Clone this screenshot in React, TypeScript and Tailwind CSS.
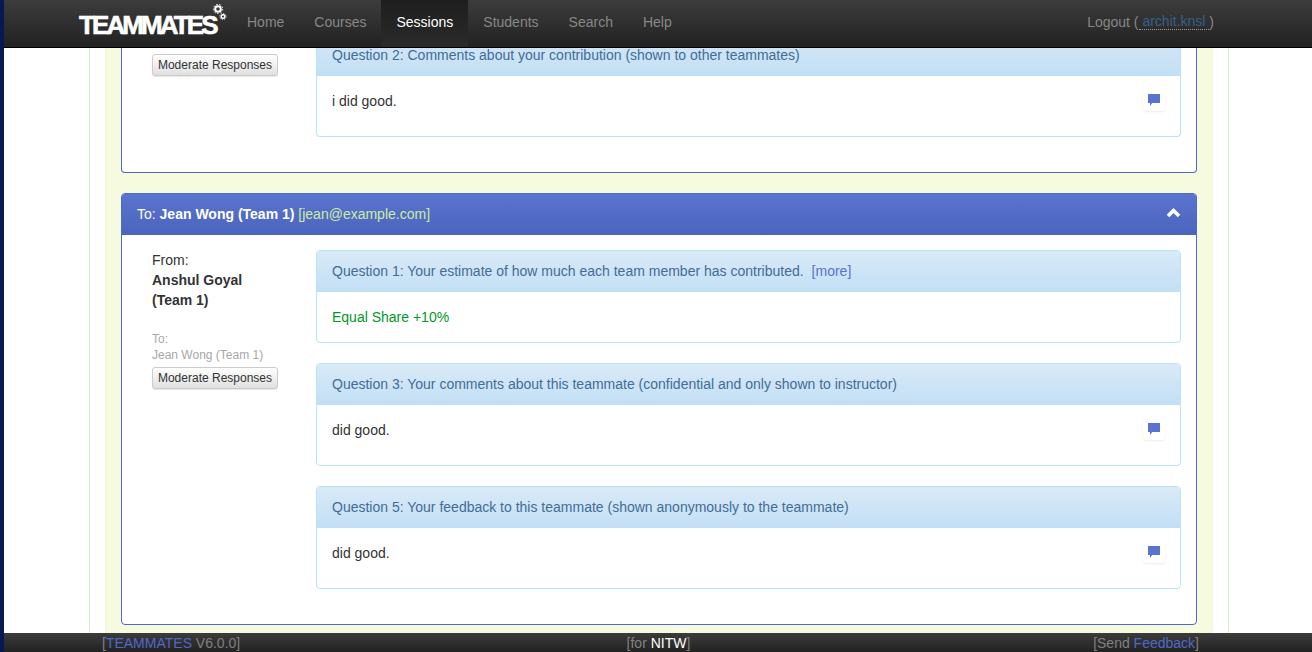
const navItems = ["Home", "Courses", "Sessions", "Students", "Search", "Help"];

function CommentButton() {
  return (
    <div className="mt-[-1px] flex h-[21px] w-[22px] items-start justify-center rounded-[3px] bg-white pt-[4px] shadow-[0_1px_2px_rgba(0,0,0,0.08)]">
      <svg width="12" height="12" viewBox="0 0 12 12">
        <path d="M0 0h12v9H4.2L2 12V9H0z" fill="#5a73cf" />
      </svg>
    </div>
  );
}

function QuestionPanel({
  title,
  more,
  answer,
  comment,
}: {
  title: string;
  more?: boolean;
  answer: React.ReactNode;
  comment?: boolean;
}) {
  return (
    <div className="overflow-hidden rounded-[4px] border border-[#b5e6f1]">
      <div className="flex h-[41px] items-center bg-gradient-to-b from-[#d9eaf7] to-[#c2dff5] px-[15px] pb-[2px] text-[#416d96]">
        {title}
        {more && <span className="ml-[8px] text-[#5a73cf]">[more]</span>}
      </div>
      {comment ? (
        <div className="flex h-[60px] items-start justify-between px-[15px] pt-[15px] text-[#333]">
          <span>{answer}</span>
          <CommentButton />
        </div>
      ) : (
        <div className="flex h-[50px] items-center px-[15px]">{answer}</div>
      )}
    </div>
  );
}

function ModerateButton() {
  return (
    <button className="h-[22px] w-[126px] rounded-[3px] border border-[#ccc] bg-gradient-to-b from-white to-[#e0e0e0] text-center text-[12px] leading-[20px] text-[#333] shadow-[0_1px_1px_rgba(0,0,0,0.1)]">
      Moderate Responses
    </button>
  );
}

export default function App() {
  return (
    <div className="flex h-[652px] w-[1312px] overflow-hidden bg-white font-['Liberation_Sans',sans-serif] text-[14px] leading-[20px] text-[#333]">
      <div className="w-[4px] shrink-0 bg-[#061a52]" />
      <div className="flex min-w-0 flex-1 flex-col">
        {/* Navbar */}
        <header className="flex h-[48px] shrink-0 items-stretch border-b border-black bg-gradient-to-b from-[#3c3c3c] to-[#222]">
          <div className="flex w-[228px] items-center pl-[75px]">
            <div className="relative flex items-center">
              <span className="mt-[2px] text-[26px] font-bold leading-none tracking-[-2.9px] text-white [-webkit-text-stroke:0.6px_white]">TEAMMATES</span>
              <svg className="absolute left-[133px] top-[-7px]" width="16" height="20" viewBox="0 0 16 20">
                <g fill="none" stroke="#fff">
                  <circle cx="6" cy="6" r="2.8" strokeWidth="2" />
                  <circle cx="6" cy="6" r="4.6" strokeWidth="1" strokeDasharray="1.6 1.6" />
                  <circle cx="11" cy="13.5" r="1.8" strokeWidth="1.4" />
                  <circle cx="11" cy="13.5" r="3.1" strokeWidth="0.9" strokeDasharray="1.2 1.2" />
                </g>
              </svg>
            </div>
          </div>
          <nav className="flex">
            {navItems.map((item) => (
              <a
                key={item}
                className={
                  item === "Sessions"
                    ? "ml-[-1px] flex items-center bg-gradient-to-b from-[#1e1e1e] to-[#2a2a2a] pb-[4px] pl-[16px] pr-[15px] text-white"
                    : "flex items-center px-[15px] pb-[4px] text-[#888]"
                }
              >
                {item}
              </a>
            ))}
          </nav>
          <div className="ml-auto flex items-center pb-[4px] pr-[98px] text-[#888]">
            Logout (<span className="border-b border-dotted border-[#999] leading-[16px] text-[#38608a]">&nbsp;archit.knsl&nbsp;</span>)
          </div>
        </header>

        {/* Page content */}
        <main className="min-h-0 flex-1 overflow-hidden">
          <div className="ml-[85px] h-full w-[1140px] border-x border-[#d3f0c6] px-[15px]">
            <div className="h-full border-x border-[#f8f3d4] bg-[#f6fbdf] px-[15px]">
              {/* Card scrolled under the navbar */}
              <div className="flex h-[125px] rounded-b-[4px] border-x border-b border-[#4f69c6] bg-white pl-[30px] pr-[15px]">
                <div className="w-[164px] shrink-0 pt-[6px]">
                  <ModerateButton />
                </div>
                <div className="flex-1">
                  <div className="overflow-hidden rounded-b-[4px] border-x border-b border-[#b5e6f1]">
                    <div className="flex h-[28px] items-start bg-gradient-to-b from-[#cfe5f6] to-[#c2dff5] px-[15px] text-[#416d96]">
                      <span className="mt-[-3px]">Question 2: Comments about your contribution (shown to other teammates)</span>
                    </div>
                    <div className="flex h-[60px] items-start justify-between px-[15px] pt-[15px]">
                      <span>i did good.</span>
                      <CommentButton />
                    </div>
                  </div>
                </div>
              </div>

              {/* Jean Wong card */}
              <div className="mt-[20px] h-[432px] overflow-hidden rounded-[4px] border border-[#4f69c6] bg-white">
                <div className="flex h-[41px] items-center justify-between bg-gradient-to-b from-[#5a75cf] to-[#4b64bd] px-[15px] pb-[2px] text-white">
                  <span>
                    To: <strong>Jean Wong (Team 1)</strong> <span className="text-[#cdec9f]">[jean@example.com]</span>
                  </span>
                  <svg className="mt-[-3px]" width="15" height="11" viewBox="0 0 15 11" fill="none">
                    <path d="M2 9L7.5 3.5L13 9" stroke="#fff" strokeWidth="3.6" />
                  </svg>
                </div>
                <div className="flex pl-[30px] pr-[15px] pt-[15px]">
                  <div className="w-[164px] shrink-0">
                    <div>From:</div>
                    <div className="w-[120px] font-bold">Anshul Goyal (Team 1)</div>
                    <div className="mt-[21px] text-[12px] leading-[16px] text-[#a8a8a8]">
                      To:
                      <br />
                      Jean Wong (Team 1)
                    </div>
                    <div className="mt-[4px]">
                      <ModerateButton />
                    </div>
                  </div>
                  <div className="flex flex-1 flex-col gap-[20px]">
                    <QuestionPanel
                      title="Question 1: Your estimate of how much each team member has contributed."
                      more
                      answer={<span className="text-[#009926]">Equal Share +10%</span>}
                    />
                    <QuestionPanel
                      title="Question 3: Your comments about this teammate (confidential and only shown to instructor)"
                      answer="did good."
                      comment
                    />
                    <QuestionPanel
                      title="Question 5: Your feedback to this teammate (shown anonymously to the teammate)"
                      answer="did good."
                      comment
                    />
                  </div>
                </div>
              </div>
            </div>
          </div>
        </main>

        {/* Footer */}
        <footer className="grid h-[19px] shrink-0 grid-cols-3 items-center bg-gradient-to-b from-[#3c3c3c] to-[#222] pl-[98px] pr-[113px] text-[#808080]">
          <div>
            [<span className="text-[#4f69c6]">TEAMMATES</span> V6.0.0]
          </div>
          <div className="pl-[16px] text-center">
            [for <span className="text-white">NITW</span>]
          </div>
          <div className="text-right">
            [Send <span className="text-[#4f69c6]">Feedback</span>]
          </div>
        </footer>
      </div>
    </div>
  );
}
